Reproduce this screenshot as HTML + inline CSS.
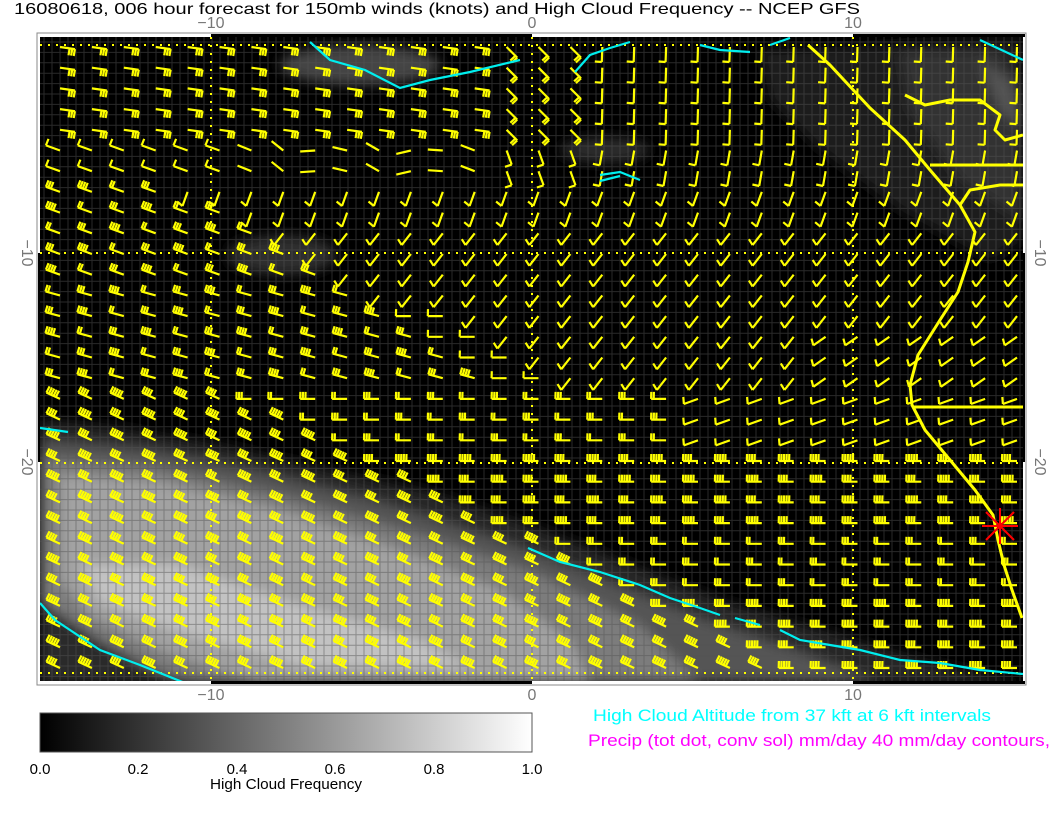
<!DOCTYPE html>
<html><head><meta charset="utf-8"><style>
html,body{margin:0;padding:0;background:#fff;width:1056px;height:816px;overflow:hidden;font-family:"Liberation Sans",sans-serif}
</style></head><body>
<svg id="s" width="1056" height="816" xmlns="http://www.w3.org/2000/svg" style="position:absolute;left:0;top:0">
<defs>
<filter id="bl" x="-20%" y="-20%" width="140%" height="140%"><feGaussianBlur stdDeviation="6"/></filter>
<linearGradient id="cb" x1="0" x2="1" y1="0" y2="0"><stop offset="0" stop-color="#000"/><stop offset="1" stop-color="#fff"/></linearGradient>
<clipPath id="pc"><rect x="40" y="37" width="983" height="644"/></clipPath>
</defs>
<text x="14" y="14" font-size="16" fill="#000" font-family="Liberation Sans" textLength="846" lengthAdjust="spacingAndGlyphs">16080618, 006 hour forecast for 150mb winds (knots) and High Cloud Frequency -- NCEP GFS</text>
<g font-size="16" fill="#777" text-anchor="middle" font-family="Liberation Sans">
<text x="211" y="28">−10</text><text x="532" y="28">0</text><text x="853" y="28">10</text>
<text x="211" y="700">−10</text><text x="532" y="700">0</text><text x="853" y="700">10</text>
<text transform="translate(22,253) rotate(90)">−10</text>
<text transform="translate(22,462) rotate(90)">−20</text>
<text transform="translate(1035,253) rotate(90)">−10</text>
<text transform="translate(1035,462) rotate(90)">−20</text>
</g>
<rect x="37" y="33" width="989" height="652" fill="#fff" stroke="#888" stroke-width="1"/>
<rect x="40" y="37" width="983" height="644" fill="#000"/>
<g fill="#000">
<rect x="211" y="34" width="321" height="3"/><rect x="853" y="34" width="172" height="3"/>
<rect x="211" y="681" width="321" height="3"/><rect x="853" y="681" width="172" height="3"/>
<rect x="38" y="253" width="2" height="209"/><rect x="1023" y="253" width="2" height="209"/>
</g>
<g clip-path="url(#pc)">
<g filter="url(#bl)">
<path d="M40,420 L120,428 L220,445 L330,470 L430,492 L530,525 L620,560 L720,600 L820,630 L920,660 L1023,683 L40,683Z" fill="#262626"/>
<path d="M40,440 L150,450 L260,472 L380,502 L500,540 L600,578 L700,618 L800,652 L880,683 L40,683Z" fill="#555"/>
<path d="M40,458 L150,466 L280,495 L420,535 L540,575 L640,625 L700,683 L200,683 L120,660 L60,630 L40,600Z" fill="#7c7c7c"/>
<path d="M60,475 L160,482 L280,510 L400,550 L500,590 L570,640 L590,683 L260,683 L160,650 L90,615 L60,580Z" fill="#a2a2a2"/>
<path d="M80,565 L180,565 L300,605 L420,640 L470,668 L300,665 L180,632 L100,602Z" fill="#c2c2c2"/>
<path d="M40,600 L100,640 L180,683 L40,683Z" fill="#2a2a2a"/>
<ellipse cx="360" cy="65" rx="80" ry="20" fill="#444"/>
<ellipse cx="605" cy="150" rx="45" ry="13" fill="#2a2a2a"/>
<ellipse cx="282" cy="255" rx="55" ry="20" fill="#2e2e2e"/>
<path d="M760,50 L1023,40 L1023,240 L990,260 L900,210 L820,150 L770,100Z" fill="#1e1e1e"/>
<path d="M900,50 L1000,50 L1023,90 L1023,220 L960,180 L910,110Z" fill="#333"/>
<path d="M980,60 L1010,80 L1023,130 L1000,110Z" fill="#555"/>
</g>
<g id="grid" stroke="#555" stroke-width="1" opacity="0.5"></g>
<g stroke="#ff0" stroke-width="2" stroke-dasharray="2,6" fill="none">
<line x1="211" y1="37" x2="211" y2="681"/><line x1="532" y1="37" x2="532" y2="681"/><line x1="853" y1="37" x2="853" y2="681"/>
<line x1="40" y1="45" x2="1023" y2="45"/><line x1="40" y1="253" x2="1023" y2="253"/><line x1="40" y1="463" x2="1023" y2="463"/><line x1="40" y1="673" x2="1023" y2="673"/>
</g>
<g id="barbs" stroke="#ff0" stroke-width="2.2" fill="none" stroke-linecap="butt"></g>
<g stroke="#ff0" stroke-width="3" fill="none" stroke-linejoin="round">
<path d="M808,45 L830,65 L870,108 L905,140 L930,170 L960,205 L975,232 L968,262 L958,292 L940,320 L918,355 L910,385 L912,405 L925,430 L950,460 L975,490 L993,515 L998,540 L1004,565 L1012,590 L1022,618"/>
<path d="M930,165 L1023,165"/><path d="M913,407 L1023,407"/>
<path d="M905,95 L925,105 L950,100 L980,100 L1000,115 L995,130 L1005,140 L1023,135"/>
<path d="M960,205 L970,190 L1000,185 L1023,185"/>
</g>
<g stroke="#0ee" stroke-width="2.2" fill="none">
<path d="M528,548 L560,562 L600,572 L640,585 L670,598 L700,608 L720,615 M735,618 L760,625 M780,630 L800,640 L830,645 L860,650 L900,660 L940,663 L980,670 L1023,674"/>
<path d="M40,603 L55,620 L70,630 L100,650 L140,665 L185,683"/>
<path d="M40,428 L68,432"/>
<path d="M310,42 L330,60 L365,70 L400,88 L430,80 L470,72 L520,60"/>
<path d="M575,72 L590,55 L610,48 L630,42 M700,45 L720,50 L750,52 M770,45 L790,38 M980,40 L1023,60"/>
<path d="M600,175 L620,172 L640,180 M600,181 L620,176"/>
</g>
<g stroke="#f00" stroke-width="2">
<line x1="982" y1="526" x2="1018" y2="526"/><line x1="1000" y1="508" x2="1000" y2="544"/>
<line x1="986" y1="512" x2="1014" y2="540"/><line x1="986" y1="540" x2="1014" y2="512"/>
</g>
</g>
<rect x="40" y="713" width="492" height="39" fill="url(#cb)" stroke="#555"/>
<g font-size="15" fill="#000" text-anchor="middle" font-family="Liberation Sans">
<text x="40" y="774">0.0</text><text x="138" y="774">0.2</text><text x="237" y="774">0.4</text><text x="335" y="774">0.6</text><text x="434" y="774">0.8</text><text x="532" y="774">1.0</text>
<text x="286" y="789" textLength="152" lengthAdjust="spacingAndGlyphs">High Cloud Frequency</text>
</g>
<text x="593" y="721" font-size="17" fill="#0ff" font-family="Liberation Sans" textLength="398" lengthAdjust="spacingAndGlyphs">High Cloud Altitude from 37 kft at 6 kft intervals</text>
<text x="588" y="746" font-size="17" fill="#f0f" font-family="Liberation Sans" textLength="462" lengthAdjust="spacingAndGlyphs">Precip (tot dot, conv sol) mm/day 40 mm/day contours,</text>
</svg>
<script>
(function(){
var g=document.getElementById("grid"),h="";
for(var x=44;x<1023;x+=8)h+='<line x1="'+x+'" y1="37" x2="'+x+'" y2="681"/>';
for(var y=42;y<681;y+=10.4)h+='<line x1="40" y1="'+y.toFixed(1)+'" x2="1023" y2="'+y.toFixed(1)+'"/>';
g.innerHTML=h;
var b=document.getElementById("barbs"),s="";
for(var r=0;r<31;r++){for(var c=0;c<31;c++){
 var sx=60+31.9*c, sy=47+20.7*r, a, n, fo=92;
 if(r<=4){ if(c<14){a=8;n=3;} else if(c<17){a=45;n=2;} else {a=92;n=1;} }
 else if(r<=6){ if(c<6){a=200;n=1;} else if(c<14){a=160+((c*17)%60);n=0;} else if(c<17){a=70;n=1;} else {a=100;n=1;} }
 else if(r<=16){ var cb=4+(r-7)*1.1; if(c<cb){a=r<12?200:195;n=2+((r+c)%3);} else if(r>=13 && c>cb && c<cb+2){a=180;n=1;} else {a=r<9?110:128;n=1;fo=110;} if(c>=24&&r>=14&&c>=cb+2){a=145;} }
 else { var cd=6+(r-17)*1.3; if(c<cd){a=205;n=4+((c+r)%2);} else {a=180;n=(r<20?2:(r<24?4:(r<27?2:4)))+((c*7+r)%2);} if(r<20&&c>=20){a=160;n=1;fo=105;} }
 var rad=a*Math.PI/180, ux=Math.cos(rad), uy=Math.sin(rad);
 var fr=(a+fo)*Math.PI/180, fx=Math.cos(fr), fy=Math.sin(fr);
 var L=15, tx=sx+ux*L, ty=sy+uy*L;
 var d="M"+sx.toFixed(1)+","+sy.toFixed(1)+"L"+tx.toFixed(1)+","+ty.toFixed(1);
 for(var k=0;k<n;k++){var px=tx-ux*2.6*k, py=ty-uy*2.6*k; d+="M"+px.toFixed(1)+","+py.toFixed(1)+"l"+(fx*7).toFixed(1)+","+(fy*7).toFixed(1);}
 s+='<path d="'+d+'"/>';
}}
b.innerHTML=s;
})();
</script>
</body></html>
